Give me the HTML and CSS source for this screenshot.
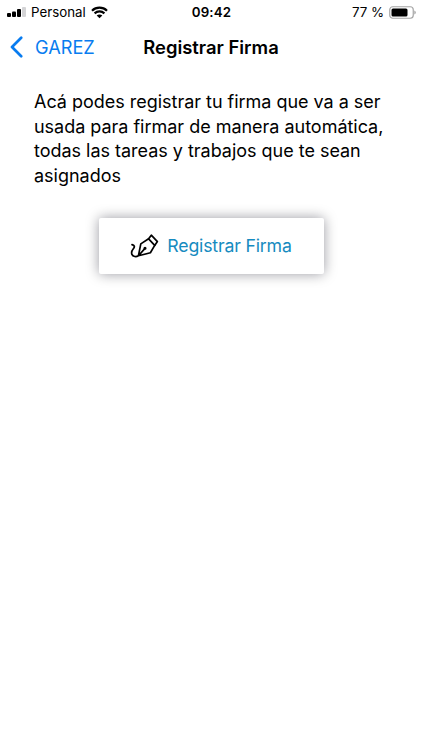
FILE: index.html
```html
<!DOCTYPE html>
<html lang="es">
<head>
    <meta charset="UTF-8">
    <meta name="viewport" content="width=device-width, initial-scale=1.0">
    <title>Registrar Firma</title>
    <link rel="stylesheet" href="styles.css">
</head>
<body>
    <div class="status-bar">
        <div class="status-left">
            <svg class="signal" width="19" height="10" viewBox="0 0 19 10">
                <rect x="0" y="6" width="4" height="4" rx="1"/>
                <rect x="5" y="4.5" width="4" height="5.5" rx="1"/>
                <rect x="10" y="2" width="4" height="8" rx="1"/>
                <rect class="signal-off" x="15" y="0" width="4" height="10" rx="1"/>
            </svg>
            <span class="carrier">Personal</span>
            <svg class="wifi" width="17" height="13" viewBox="0 0 17 13">
                <path d="M1 4.7C5.2 .7 11.8 .7 16 4.7M3.6 7.4C6.4 4.8 10.6 4.8 13.4 7.4"/>
                <path class="wifi-dot" d="M5.7 9.5C7.3 8.1 9.7 8.1 11.3 9.5L8.5 12.3z"/>
            </svg>
        </div>
        <div class="clock">09:42</div>
        <div class="status-right">
            <span class="percent">77 %</span>
            <svg class="battery" width="27" height="13" viewBox="0 0 27 13">
                <rect class="battery-case" x=".75" y=".75" width="23.5" height="11.5" rx="3"/>
                <rect x="2.5" y="2.5" width="16" height="8" rx="1.5"/>
                <path class="battery-tip" d="M25.3 4.5q1.5.5 1.5 2t-1.5 2z"/>
            </svg>
        </div>
    </div>

    <header class="nav-bar">
        <a class="back" href="#">
            <svg width="13" height="22" viewBox="0 0 13 22"><path d="M11.2 1.8L2 11l9.2 9.2"/></svg>
            <span>GAREZ</span>
        </a>
        <h1>Registrar Firma</h1>
    </header>

    <main>
        <p class="description">Acá podes registrar tu firma que va a ser<br>usada para firmar de manera automática,<br>todas las tareas y trabajos que te sean<br>asignados</p>

        <button class="sign-button" type="button">
            <svg width="29" height="25" viewBox="0 0 29 25">
                <path d="M2 11.6C4.5 12.2 5 13.8 3.5 15.5C1.8 17.6 1.2 19.6 1.9 21.4C2.9 24 6.4 23.9 8.4 22.8L10.8 10.9L18.6 5.8L24.7 12.4L20.4 19.8L8.4 22.8L14.8 15.6"/>
                <path d="M18.6 5.8L21.3 2.2L27.4 8.6L24.7 12.4"/>
                <circle cx="15" cy="15.3" r=".7"/>
            </svg>
            <span>Registrar Firma</span>
        </button>
    </main>
</body>
</html>
```

FILE: styles.css
```css
body {
    margin: 0;
    min-height: 100vh;
    background-color: #fff;
    color: #000;
    font-family: Inter, "Liberation Sans", sans-serif;
}
svg {
    flex: none;
    display: block;
}
.status-bar {
    display: grid;
    grid-template-columns: 1fr auto 1fr;
    align-items: center;
    height: 24px;
    padding: 0 6px 0 7px;
    font-size: 13.3px;
}
.status-left, .status-right {
    display: flex;
    align-items: center;
}
.status-right {
    justify-content: flex-end;
}
.signal-off {
    fill: #d4d4d6;
}
.carrier {
    margin: 0 5px 0 5px;
}
.wifi {
    fill: none;
    stroke: #000;
    stroke-width: 2.2;
}
.wifi-dot {
    fill: #000;
    stroke: none;
}
.clock {
    font-weight: 600;
    letter-spacing: 0.2px;
}
.percent {
    margin-right: 5px;
}
.battery-case {
    fill: none;
    stroke: #a5a5a5;
    stroke-width: 1.2;
}
.battery-tip {
    fill: #a5a5a5;
}
.nav-bar {
    display: grid;
    grid-template-columns: 1fr auto 1fr;
    align-items: center;
    height: 46px;
    padding: 0 10px;
}
.back {
    display: flex;
    align-items: center;
    color: #087cf0;
    font-size: 18.2px;
    text-decoration: none;
}
.back svg {
    margin-right: 12px;
    fill: none;
    stroke: #087cf0;
    stroke-width: 2.7;
    stroke-linecap: round;
    stroke-linejoin: round;
}
h1 {
    margin: 0;
    font-size: 18.4px;
    font-weight: 600;
}
.description {
    margin: 20px 34px 29px;
    font-size: 18px;
    line-height: 24.7px;
    white-space: nowrap;
    letter-spacing: -0.02px;
}
.sign-button {
    display: flex;
    align-items: center;
    justify-content: center;
    gap: 8px;
    width: 225px;
    height: 56px;
    margin: 0 auto;
    padding: 0;
    border: none;
    border-radius: 2px;
    background-color: #fff;
    box-shadow: 0 0 13px rgba(0, 0, 20, 0.4);
    color: #168bc0;
    font-family: inherit;
    font-size: 17.7px;
    letter-spacing: -0.18px;
}
.sign-button svg {
    fill: none;
    stroke: #000;
    stroke-width: 1.7;
    stroke-linecap: round;
    stroke-linejoin: round;
}
```
